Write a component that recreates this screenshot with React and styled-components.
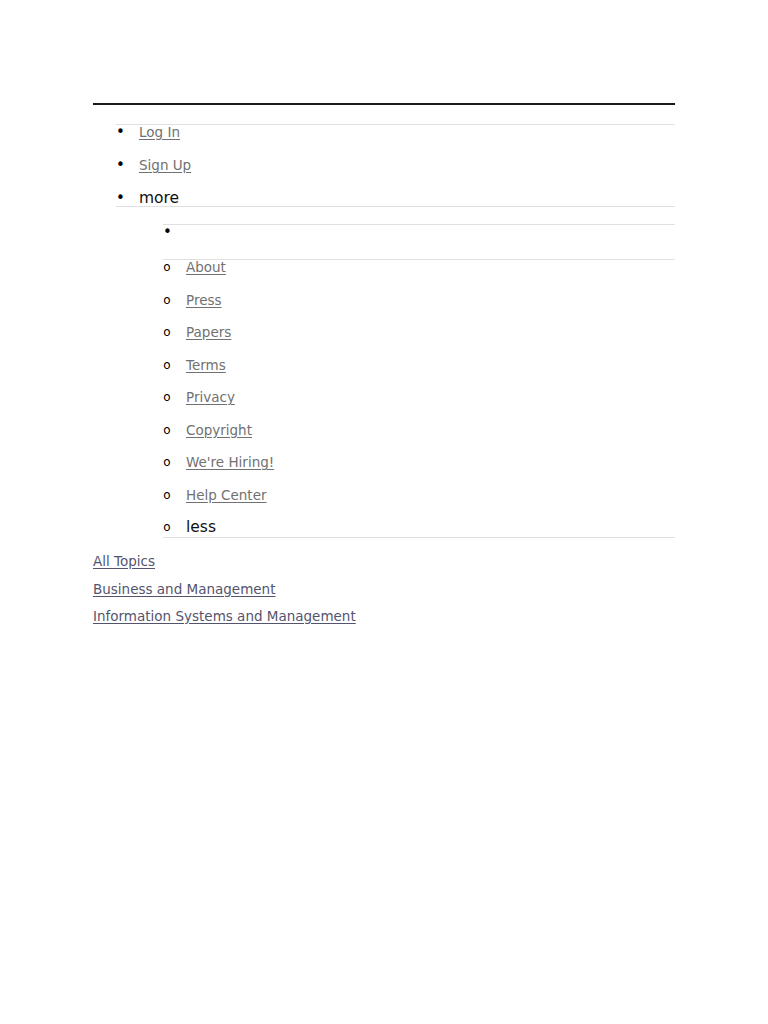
import React from "react";
import styled, { createGlobalStyle } from "styled-components";

const GlobalStyle = createGlobalStyle`
  body {
    margin: 0;
    background: #fff;
    font-family: "DejaVu Sans", "Liberation Sans", sans-serif;
  }
`;

const Page = styled.div`
  width: 582px;
  padding: 103px 0 0 93px;
`;

const Rule = styled.div`
  height: 2px;
  background: #1a1a1a;
  margin-bottom: 19px;
`;

const NavList = styled.ul`
  list-style: none;
  margin: 0 0 0 ${(p) => p.$indent}px;
  padding: 0;
  border-top: 1px solid #e0e0e0;
`;

const Item = styled.li`
  position: relative;
  padding: 0 0 ${(p) => p.$gap}px 23px;
  font-size: 13.5px;
  line-height: 14px;
  min-height: 14px;
  border-bottom: ${(p) => (p.$divider ? "1px solid #e0e0e0" : "none")};
`;

const Marker = styled.span`
  position: absolute;
  left: 0;
  top: 0;
  width: 8px;
  text-align: center;
  font-size: ${(p) => (p.$circle ? "12px" : "15px")};
  line-height: 14px;
  color: #000;
`;

const NavLink = styled.a`
  color: #717171;
  text-decoration: underline;
  text-underline-offset: 2px;
`;

const Toggle = styled.span`
  color: #111;
  font-size: 15.5px;
`;

const Sub = styled.li`
  margin: 17px 0 0 47px;
`;

const Topics = styled.div`
  display: flex;
  flex-direction: column;
  gap: 11px;
  margin-top: 15px;
`;

const TopicLink = styled.a`
  color: #54546e;
  font-size: 13.5px;
  line-height: 16.5px;
  text-decoration: underline;
  text-underline-offset: 2px;
`;

const subLinks = [
  "About",
  "Press",
  "Papers",
  "Terms",
  "Privacy",
  "Copyright",
  "We're Hiring!",
  "Help Center",
];

export default function App() {
  return (
    <>
      <GlobalStyle />
      <Page>
        <Rule />
        <NavList $indent={23}>
          <Item $gap={19}>
            <Marker>•</Marker>
            <NavLink href="#">Log In</NavLink>
          </Item>
          <Item $gap={19}>
            <Marker>•</Marker>
            <NavLink href="#">Sign Up</NavLink>
          </Item>
          <Item $gap={1} $divider>
            <Marker>•</Marker>
            <Toggle>more</Toggle>
          </Item>
          <Sub>
            <NavList $indent={0}>
              <Item $gap={20} $divider>
                <Marker>•</Marker>
              </Item>
              {subLinks.map((l) => (
                <Item key={l} $gap={18.5}>
                  <Marker $circle>o</Marker>
                  <NavLink href="#">{l}</NavLink>
                </Item>
              ))}
              <Item $gap={3} $divider>
                <Marker $circle>o</Marker>
                <Toggle>less</Toggle>
              </Item>
            </NavList>
          </Sub>
        </NavList>
        <Topics>
          <TopicLink href="#">All Topics</TopicLink>
          <TopicLink href="#">Business and Management</TopicLink>
          <TopicLink href="#">Information Systems and Management</TopicLink>
        </Topics>
      </Page>
    </>
  );
}
